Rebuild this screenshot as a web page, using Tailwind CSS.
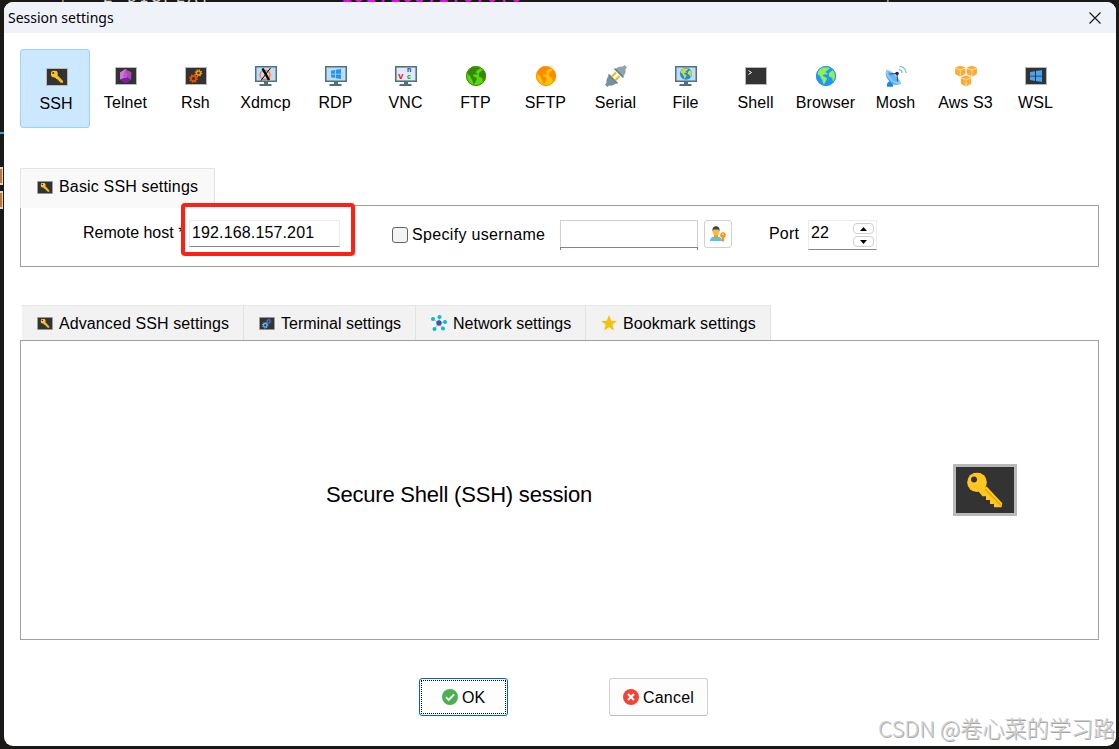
<!DOCTYPE html>
<html lang="en">
<head>
    <meta charset="UTF-8">
    <meta name="viewport" content="width=device-width, initial-scale=1.0">
    <title>Session settings</title>
    <script src="https://cdn.jsdelivr.net/npm/@tailwindcss/browser@4"></script>
</head>
<body class="relative h-[749px] w-[1119px] overflow-hidden bg-[#1b1918] pl-1 pt-0.5 font-['Liberation_Sans',Arial,sans-serif] text-base leading-6 text-black">
    <!-- shared icons -->
    <svg class="hidden">
        <symbol id="term" viewBox="0 0 22 18">
            <rect width="22" height="18" fill="#b9b9b9"/>
            <rect x="1" y="1" width="20" height="16" fill="#333"/>
        </symbol>
        <symbol id="keyShape" viewBox="0 0 36 36">
            <path fill="#ffc720" d="M19.700 14L35.300 30.800 34.500 34.800H27v-3.300h-4v-4h-4v-3.700h-3.500L11.500 19z"/>
            <circle cx="10" cy="9.800" r="9.800" fill="#ffc720"/>
            <circle cx="7" cy="7" r="3" fill="#333"/>
            <path stroke="#e5ab0b" stroke-width="1.600" d="M18 16.500l16 16.500"/>
        </symbol>
        <symbol id="key" viewBox="0 0 22 18">
            <use href="#term" width="22" height="18"/>
            <use href="#keyShape" x="4.800" y="2.500" width="12.700" height="12.700"/>
        </symbol>
        <symbol id="monitor" viewBox="0 0 22 22">
            <path fill="#546e7a" d="M0 1h22v16H0zM9 17h4v2h3.500v2h-12v-2H9z"/>
            <path fill="#bbdefb" d="M1.500 2.500h19v13h-19z"/>
        </symbol>
        <symbol id="globe" viewBox="0 0 20 20">
            <path d="M7 .8C9 2 11.500.5 13.500 1.500c1 1-.5 2-2 2.500-.5 1.500-2 1-2 2.500 1 .5 2.500.5 2 2-1.500 0-3-1-4.500.5-.5 1 1 1.500 2 2 1.500.5 2.500 1.500 1.500 3C9.500 15 9 17 8 18.500 6.500 17 7 15 6 13.500 4.500 12 4.500 10.500 3.500 9.500 2.500 9 1 8 1.500 6 3 3.500 4.500 1.500 7 .8zM14 6c1.500-1 2.500-2.500 4-1.500 1.500 2 2 4.500 1.500 7-.7 1.500-1 2.500-2 4-1.500-.5-.5-2.500-1.500-3.500-1-1-2.500-.5-3-2-.3-1.500 0-3 1-4z"/>
        </symbol>
        <symbol id="gears" viewBox="0 0 22 18">
            <use href="#term" width="22" height="18"/>
            <circle cx="8.500" cy="11.500" r="2.500" fill="none" stroke="var(--a)" stroke-width="1.800"/>
            <circle cx="8.500" cy="11.500" r="3.700" fill="none" stroke="var(--a)" stroke-width="1.600" stroke-dasharray="1.450 1.450"/>
            <circle cx="13.500" cy="6" r="2" fill="none" stroke="var(--b)" stroke-width="1.500"/>
            <circle cx="13.500" cy="6" r="3.100" fill="none" stroke="var(--b)" stroke-width="1.300" stroke-dasharray="1.220 1.220"/>
        </symbol>
        <symbol id="win" viewBox="0 0 12 12">
            <path d="M0 2l5-.8v4.500H0zM6 1l6-1v5.700H6zM0 6.500h5v4.400L0 10zM6 6.500h6V12l-6-1z"/>
        </symbol>
    </svg>

    <!-- terminal output showing behind the window -->
    <div class="absolute left-0 top-0 h-[2px] w-full overflow-hidden font-['Liberation_Mono',monospace] text-base leading-none">
        <span class="absolute left-[58px] top-[-9px] text-[#c79b5b]">|</span>
        <span class="absolute left-[103px] top-[-10px] whitespace-pre tracking-[2.500px] text-[#d8d4cf]">2 DISPLAY</span>
        <span class="absolute left-[342px] top-[-10px] font-bold tracking-[2.500px] text-[#e212e2]">192.168.1.6:0.0</span>
        <span class="absolute left-[883px] top-[-9px] text-[#b9b4ae]">|</span>
    </div>
    <div class="absolute left-0 top-[132px] h-0.5 w-1 bg-[#3fa9c9]"></div>
    <div class="absolute left-0 top-[167px] h-[18px] w-[3px] border-y-2 border-r border-[#d8d4cf] bg-[#b9772f]"></div>
    <div class="absolute left-0 top-[191px] h-[18px] w-[3px] border-y-2 border-r border-[#d8d4cf] bg-[#b9772f]"></div>

    <main class="relative h-[744px] w-[1112px] overflow-hidden rounded-[9px] bg-white">
        <header class="flex h-[31px] items-center justify-between bg-[#eff3f9] pl-1 pr-[15px]">
            <h1 class="font-['Noto_Sans','Open_Sans',sans-serif] text-[14px]">Session settings</h1>
            <svg class="size-3" viewBox="0 0 12 12" fill="none" stroke="#1a1a1a" stroke-width="1.200"><path d="M.5.5l11 11M11.500.5l-11 11"/></svg>
        </header>

        <nav class="ml-4 mt-4 grid w-[1050px] grid-cols-[repeat(15,70px)] whitespace-nowrap tracking-[0.1px]">
            <div class="flex h-[79px] flex-col items-center rounded-[3px] border border-[#99d1ff] bg-[#cce8ff] pl-[2px] pt-4">
                <svg class="ml-[2px] h-[22px] w-[22px] shrink-0" viewBox="0 0 22 22"><use href="#key" y="2" width="22" height="18"/></svg>
                <span class="mt-1">SSH</span>
            </div>
            <div class="flex h-[79px] flex-col items-center pl-px pt-4">
                <svg class="ml-px size-[22px] shrink-0" viewBox="0 0 22 22">
                    <use href="#term" y="2" width="22" height="18"/>
                    <path fill="#ab47bc" d="M10.500 4l6 3.500-.5 7-5.500 3.500L5 14.500V7.500z"/>
                    <path fill="#ce73db" d="M10.500 4L12 12l-7 2.500V7.500z"/>
                    <path fill="#7b1fa2" d="M12 12l4 2.500-5.500 3.500L5 14.500z"/>
                    <path fill="#ba55cb" d="M10.500 4L8 12l4 1z"/>
                </svg>
                <span class="mt-1">Telnet</span>
            </div>
            <div class="flex h-[79px] flex-col items-center pl-px pt-4">
                <svg class="ml-px size-[22px] shrink-0 [--a:#e65100] [--b:#ff9800]" viewBox="0 0 22 22"><use href="#gears" y="2" width="22" height="18"/></svg>
                <span class="mt-1">Rsh</span>
            </div>
            <div class="flex h-[79px] flex-col items-center pl-px pt-4">
                <svg class="ml-px size-[22px] shrink-0" viewBox="0 0 22 22">
                    <use href="#monitor" width="22" height="22"/>
                    <ellipse cx="10" cy="10" rx="5" ry="4.500" fill="none" stroke="#ff7043" stroke-width="1.300"/>
                    <path d="M13.500 5.500c4 1.500 5 6 1 8.500" fill="none" stroke="#ffcc80" stroke-width="1.300"/>
                    <path d="M7.500 3.500l6.500 11.500" stroke="#000" stroke-width="2.500"/>
                    <path d="M15.500 3L6 15.500" stroke="#000" stroke-width="1"/>
                </svg>
                <span class="mt-1">Xdmcp</span>
            </div>
            <div class="flex h-[79px] flex-col items-center pl-px pt-4">
                <svg class="ml-px size-[22px] shrink-0" viewBox="0 0 22 22">
                    <use href="#monitor" width="22" height="22"/>
                    <use href="#win" x="6" y="4" width="10" height="10" fill="#2196f3"/>
                </svg>
                <span class="mt-1">RDP</span>
            </div>
            <div class="flex h-[79px] flex-col items-center pl-px pt-4">
                <svg class="ml-px size-[22px] shrink-0 font-bold tracking-normal" viewBox="0 0 22 22">
                    <use href="#monitor" width="22" height="22"/>
                    <path fill="#dcebf7" d="M2 3h18v12H2z"/>
                    <text x="3.200" y="14" font-size="9.500" fill="#f01818">v</text>
                    <text x="12" y="7" font-size="7" fill="#2020e0">n</text>
                    <text x="12" y="14.200" font-size="7" fill="#109810">c</text>
                </svg>
                <span class="mt-1">VNC</span>
            </div>
            <div class="flex h-[79px] flex-col items-center pl-px pt-4">
                <svg class="ml-px size-[22px] shrink-0" viewBox="0 0 22 22">
                    <circle cx="11" cy="11" r="10" fill="#5bd80b"/>
                    <use href="#globe" x="1" y="1" width="20" height="20" fill="#338a08"/>
                    <circle cx="11" cy="11" r="9.500" fill="none" stroke="#338a08"/>
                </svg>
                <span class="mt-1">FTP</span>
            </div>
            <div class="flex h-[79px] flex-col items-center pl-px pt-4">
                <svg class="ml-px size-[22px] shrink-0" viewBox="0 0 22 22">
                    <circle cx="11" cy="11" r="10" fill="#ffc400"/>
                    <use href="#globe" x="1" y="1" width="20" height="20" fill="#ff8a00"/>
                    <circle cx="11" cy="11" r="9.500" fill="none" stroke="#ff8a00"/>
                </svg>
                <span class="mt-1">SFTP</span>
            </div>
            <div class="flex h-[79px] flex-col items-center pl-px pt-4">
                <svg class="ml-px size-[22px] shrink-0" viewBox="0 0 22 22">
                    <path stroke="#ffb300" stroke-width="2" d="M7 11.500l4-4M10.500 15l4-4"/>
                    <path fill="#90a4ae" d="M10 4.500c2-2.500 5-3.500 8-3L19.500 0 22 2.500 20.500 4c.5 3-.5 6-3 8z"/>
                    <path fill="#78909c" d="M4.500 10l7.500 7.500c-2 2.500-5 3.500-8 3L2.500 22 0 19.500 1.500 18c-.5-3 .5-6 3-8z"/>
                    <path stroke="#607d8b" stroke-width="1.600" d="M9.500 3.500l9 9M3.500 9.500l9 9"/>
                </svg>
                <span class="mt-1">Serial</span>
            </div>
            <div class="flex h-[79px] flex-col items-center pl-px pt-4">
                <svg class="ml-px size-[22px] shrink-0" viewBox="0 0 22 22">
                    <use href="#monitor" width="22" height="22"/>
                    <circle cx="11" cy="8.800" r="6" fill="#1e88e5"/>
                    <use href="#globe" x="5" y="2.800" width="12" height="12" fill="#cddc39"/>
                </svg>
                <span class="mt-1">File</span>
            </div>
            <div class="flex h-[79px] flex-col items-center pl-px pt-4">
                <svg class="ml-px size-[22px] shrink-0" viewBox="0 0 22 22">
                    <use href="#term" y="2" width="22" height="18"/>
                    <path d="M3.500 5.500l3 2-3 2" fill="none" stroke="#fff"/>
                </svg>
                <span class="mt-1">Shell</span>
            </div>
            <div class="flex h-[79px] flex-col items-center pl-px pt-4">
                <svg class="ml-px size-[22px] shrink-0" viewBox="0 0 22 22">
                    <circle cx="11" cy="11" r="10" fill="#2196f3"/>
                    <use href="#globe" x="1" y="1" width="20" height="20" fill="#8df05a"/>
                    <circle cx="11" cy="11" r="9.500" fill="none" stroke="#2196f3"/>
                </svg>
                <span class="mt-1">Browser</span>
            </div>
            <div class="flex h-[79px] flex-col items-center pl-px pt-4">
                <svg class="ml-px size-[22px] shrink-0" viewBox="0 0 22 22">
                    <path fill="#1e88e5" d="M2 21.800v-3l3-3.500 3 4v2.500z"/>
                    <path fill="#42a5f5" d="M1.500 5C-1 10 3 17 9 19.500c3 .7 5.500 0 7-1z"/>
                    <path fill="#90caf9" d="M1.500 5c4 0 7 2.500 9.500 5.500 2.500 3 4.500 5 5 8-3 1.500-8 0-11.500-4C2 11.500 0 8 1.500 5z"/>
                    <path fill="#64b5f6" d="M3 6.500c3 .5 6 3 8 5.500s3 4 3.500 5.500c-3 0-6.500-1.500-9-4.500-2-2.500-3-4.500-2.500-6.500z"/>
                    <path fill="none" stroke="#37474f" d="M4.500 9l7.500-.5.500 7.500"/>
                    <circle cx="12" cy="8.500" r="1.800" fill="#1a237e"/>
                    <path fill="none" stroke="#64b5f6" stroke-width="1.100" d="M14 4.500c2 .3 3 1.500 3.300 3.300M14.500 1.200c4 .5 6.300 3 6.800 6.800"/>
                </svg>
                <span class="mt-1">Mosh</span>
            </div>
            <div class="flex h-[79px] flex-col items-center pl-px pt-4">
                <svg class="ml-px size-[22px] shrink-0" viewBox="0 0 22 22">
                    <g fill="#fbab34">
                        <path id="cube" d="M5.300.8l5 1.700V9l-5 2.800L.1 9V2.500z"/>
                        <use href="#cube" x="11.600"/>
                        <use href="#cube" x="5.800" y="9.700"/>
                    </g>
                    <g fill="none" stroke="#fff3d6" stroke-width=".7">
                        <path id="edges" d="M.1 3.300l5.200 1.500 5-1.500M5.300 4.800v7"/>
                        <use href="#edges" x="11.600"/>
                        <use href="#edges" x="5.800" y="9.700"/>
                    </g>
                </svg>
                <span class="mt-1">Aws S3</span>
            </div>
            <div class="flex h-[79px] flex-col items-center pl-px pt-4">
                <svg class="ml-px size-[22px] shrink-0" viewBox="0 0 22 22">
                    <use href="#term" y="2" width="22" height="18"/>
                    <use href="#win" x="5" y="5" width="12" height="12" fill="#42a5f5"/>
                </svg>
                <span class="mt-1">WSL</span>
            </div>
        </nav>

        <!-- basic settings -->
        <section class="ml-4 mt-10 w-[1079px]">
            <div class="relative z-10 -mb-[3px] flex h-10 w-[195px] items-center gap-1.5 whitespace-nowrap border border-b-0 border-[#e5e5e5] bg-[#f9f9f9] pb-[3px] pl-4">
                <svg class="h-[13px] w-4 shrink-0"><use href="#key" width="16" height="13"/></svg>
                <span class="tracking-[0.17px]">Basic SSH settings</span>
            </div>
            <div class="flex h-[62px] items-start whitespace-nowrap border border-[#a0a0a0]">
                <label class="ml-[62px] mt-[15px] w-[106px]">Remote host *</label>
                <div class="mt-[14px] flex h-[27px] w-[151px] items-center border border-[#ececec] border-b-[#868686] pb-px pl-[2px] tracking-[0.14px]">192.168.157.201</div>
                <div class="ml-[52px] mt-[21px] size-4 rounded-[3px] border border-[#626262] bg-[#f3f3f3]"></div>
                <label class="ml-1 mt-[17px] w-[148px] tracking-[0.33px]">Specify username</label>
                <div class="mt-[14px] h-[30px] w-[138px] border-x border-t border-[#cfcfcf]">
                    <div class="-mx-px mt-[26px] h-[3px] border-x border-t border-[#858090]"></div>
                </div>
                <div class="ml-1.5 mt-[14px] flex h-7 w-7 items-center justify-center rounded-[3px] border border-[#d0d0d0] bg-[#fdfdfd]">
                    <svg class="size-4" viewBox="0 0 16 16">
                        <path fill="#4fc3f7" d="M0 15c0-3.500 2.500-4.500 6-4.500s6 1 6 4.500z"/>
                        <path fill="#ff9800" d="M4 8h4v3l-2 2-2-2z"/>
                        <ellipse cx="6" cy="5.500" rx="3.400" ry="4" fill="#ffb74d"/>
                        <path fill="#424242" d="M2.500 5.500C2 2 3.500.3 6 .3s4 1.700 3.500 5.200L8.500 3.500h-5z"/>
                        <path fill="#fb9b04" fill-rule="evenodd" d="M13 6a3 3 0 0 1 1.200 5.700v3.800h-2.400v-3.800A3 3 0 0 1 13 6zm0 1.400a.8.8 0 1 0 .01 1.600.8.8 0 0 0-.01-1.600z"/>
                    </svg>
                </div>
                <label class="ml-[37px] mt-4 w-[39px] tracking-[0.2px]">Port</label>
                <div class="mt-[14px] flex h-[30px] w-[69px] justify-between border border-[#ececec] border-b-[#868686] pl-0.5 pr-0.5">
                    <span class="tracking-[0.2px]">22</span>
                    <div class="flex flex-col gap-[2px] pt-[2px]">
                        <div class="flex h-[11px] w-[21px] items-center justify-center rounded-[4px] border border-[#d0d0d0]">
                            <svg class="h-1 w-[7px]" viewBox="0 0 7 4"><path d="M0 4l3.500-4L7 4z"/></svg>
                        </div>
                        <div class="flex h-[11px] w-[21px] items-center justify-center rounded-[4px] border border-[#d0d0d0]">
                            <svg class="h-1 w-[7px]" viewBox="0 0 7 4"><path d="M0 0h7L3.500 4z"/></svg>
                        </div>
                    </div>
                </div>
            </div>
        </section>
        <div class="absolute left-[177px] top-[201px] z-20 h-[53px] w-[174px] rounded-[4px] border-4 border-[#ff2015]"></div>

        <!-- detail tabs -->
        <section class="ml-4 mt-[38px] w-[1079px]">
            <div class="ml-0.5 flex h-[35px] w-[749px] whitespace-nowrap border-t border-[#e5e5e5] bg-[#f2f2f2]">
                <div class="flex w-[222px] items-center gap-1.5 border-r border-[#e2e2e2] pl-[15px]">
                    <svg class="h-[13px] w-4 shrink-0"><use href="#key" width="16" height="13"/></svg>
                    <span class="pt-0.5 tracking-[0.1px]">Advanced SSH settings</span>
                </div>
                <div class="flex w-[172px] items-center gap-1.5 border-r border-[#e2e2e2] pl-[15px]">
                    <svg class="h-[13px] w-4 shrink-0 [--a:#64b5f6] [--b:#5c6bc0]"><use href="#gears" width="16" height="13"/></svg>
                    <span class="pt-0.5">Terminal settings</span>
                </div>
                <div class="flex w-[170px] items-center gap-1.5 border-r border-[#e2e2e2] pl-[15px]">
                    <svg class="size-4 shrink-0" viewBox="0 0 16 16">
                        <path stroke="#b0bec5" d="M8 8L1.500 3.500M8 8l.5-6M8 8l6-1M8 8l4 6M8 8l-4.500 6"/>
                        <g fill="#00bcd4">
                            <circle cx="2" cy="4" r="2"/><circle cx="8.500" cy="2" r="2"/><circle cx="14" cy="7" r="2"/><circle cx="12" cy="13.500" r="2"/><circle cx="3.500" cy="14" r="2"/>
                        </g>
                        <circle cx="8" cy="8" r="2.700" fill="#3f51b5"/>
                    </svg>
                    <span class="pt-0.5">Network settings</span>
                </div>
                <div class="flex w-[185px] items-center gap-1.5 border-r border-[#e2e2e2] pl-[15px]">
                    <svg class="size-4 shrink-0" viewBox="0 0 16 16"><path fill="#f4c20d" d="M8 0l2.200 5.700 5.800.2-4.600 3.700L13 15.500l-5-3.300-5 3.300 1.600-5.900L0 5.900l5.800-.2z"/></svg>
                    <span class="pt-0.5 tracking-[0.07px]">Bookmark settings</span>
                </div>
            </div>
            <div class="flex h-[300px] items-center border border-[#a0a0a0]">
                <div class="ml-[305px] mt-[9px] w-[627px] text-[22px] tracking-[-0.21px]">Secure Shell (SSH) session</div>
                <svg class="h-[52px] w-16" viewBox="0 0 64 52">
                    <path fill="#b9b9b9" d="M0 0h64v52H0z"/>
                    <path fill="#333" d="M3 3h58v46H3z"/>
                    <use href="#keyShape" x="14" y="8.500" width="36" height="36"/>
                </svg>
            </div>
        </section>

        <footer class="ml-[415px] mt-[38px] flex gap-[101px]">
            <div class="h-[38px] w-[89px] rounded-[3px] border border-[#0067c0] bg-[#fdfdfd] p-px">
                <div class="flex h-full items-center justify-center gap-1 border border-dotted border-black">
                    <svg class="size-4" viewBox="0 0 16 16"><circle cx="8" cy="8" r="8" fill="#4caf50"/><path fill="none" stroke="#fff" stroke-width="1.800" d="M4 8.200l2.700 2.700L12.200 5.300"/></svg>
                    <span class="pt-0.5">OK</span>
                </div>
            </div>
            <div class="flex h-[38px] w-[99px] items-center justify-center gap-1 rounded-[3px] border border-[#d0d0d0] border-b-[#bbb] bg-[#fdfdfd]">
                <svg class="size-4" viewBox="0 0 16 16"><circle cx="8" cy="8" r="8" fill="#f44336"/><path stroke="#fff" stroke-width="2" d="M5 5l6 6M11 5l-6 6"/></svg>
                <span class="pt-0.5 tracking-[0.2px]">Cancel</span>
            </div>
        </footer>
    </main>

    <div class="absolute left-[878px] top-[713px] whitespace-nowrap font-['Noto_Sans_CJK_SC',sans-serif] text-[22.200px] font-light leading-7 text-[#cfcfcf] [text-shadow:1px_1px_0_#a8a8a8]">CSDN @卷心菜的学习路</div>
</body>
</html>
